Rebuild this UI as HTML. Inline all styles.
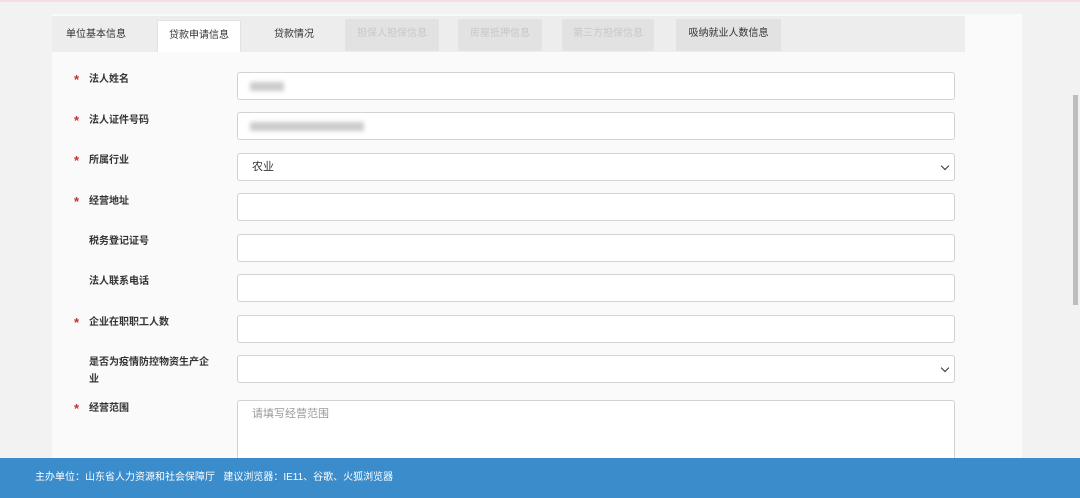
<!DOCTYPE html>
<html><head><meta charset="utf-8"><style>
*{margin:0;padding:0;box-sizing:border-box}
body{width:1080px;height:498px;overflow:hidden;background:#f2f2f2;font-family:"Liberation Sans","Noto Sans CJK SC",sans-serif;font-size:11px;color:#333;position:relative}
.pink{position:absolute;left:0;top:0;width:1080px;height:2px;background:#f6dde3}
.panel{position:absolute;left:52px;top:14px;width:970px;height:450px;background:#fafafa}
.tabbar{position:absolute;left:52px;top:16px;width:913px;height:36px;background:#ededed}
.tab{position:absolute;top:20px;height:32px;line-height:30px;text-align:center;font-size:10px;color:#333}
.tab.act{background:#fff;border:1px solid #e2e2e2;border-bottom:none}
.tab.dis{background:#e2e2e2;color:#c8c8c8;border-radius:2px;top:19px}
.tab.gr{background:#e2e2e2;border-radius:2px;top:19px}
.lab{position:absolute;left:89px;font-size:10px;color:#333;line-height:17px;font-weight:bold}
.star{position:absolute;left:74px;color:#c9302c;font-size:13px;font-weight:bold}
.inp{position:absolute;left:237px;width:718px;height:28px;background:#fff;border:1px solid #d2d2d2;border-radius:3px;font-size:11px;line-height:26px;padding-left:14px}
.arrow{position:absolute;right:6px;top:9px;width:6px;height:6px;border-right:1.5px solid #333;border-bottom:1.5px solid #333;transform:rotate(45deg)}
.blur{position:absolute;background:#ccc;filter:blur(2px)}
.foot{position:absolute;left:0;top:458px;width:1080px;height:40px;background:#3a8ccb;color:#fff;font-size:10px;line-height:40px;padding-left:35px}
.sb{position:absolute;left:1073px;top:95px;width:5px;height:210px;background:#bdbdbd}
</style></head><body>
<div class="pink"></div>
<div class="panel"></div>
<div class="tabbar"></div>
<div class="tab" style="left:56px;width:80px">单位基本信息</div>
<div class="tab act" style="left:157px;width:84px">贷款申请信息</div>
<div class="tab" style="left:258px;width:72px">贷款情况</div>
<div class="tab dis" style="left:345px;width:94px">担保人担保信息</div>
<div class="tab dis" style="left:458px;width:84px">房屋抵押信息</div>
<div class="tab dis" style="left:562px;width:92px">第三方担保信息</div>
<div class="tab gr" style="left:676px;width:105px">吸纳就业人数信息</div>

<span class="star" style="top:72px">*</span><div class="lab" style="top:71px">法人姓名</div>
<div class="inp" style="top:72px"><div class="blur" style="left:12px;top:9px;width:34px;height:9px"></div></div>
<span class="star" style="top:113px">*</span><div class="lab" style="top:112px">法人证件号码</div>
<div class="inp" style="top:112px"><div class="blur" style="left:12px;top:9px;width:114px;height:9px"></div></div>
<span class="star" style="top:153px">*</span><div class="lab" style="top:152px">所属行业</div>
<div class="inp" style="top:153px">农业<span class="arrow"></span></div>
<span class="star" style="top:194px">*</span><div class="lab" style="top:193px">经营地址</div>
<div class="inp" style="top:193px"></div>
<div class="lab" style="top:233px">税务登记证号</div>
<div class="inp" style="top:234px"></div>
<div class="lab" style="top:273px">法人联系电话</div>
<div class="inp" style="top:274px"></div>
<span class="star" style="top:315px">*</span><div class="lab" style="top:314px">企业在职职工人数</div>
<div class="inp" style="top:315px"></div>
<div class="lab" style="top:354px;width:126px">是否为疫情防控物资生产企业</div>
<div class="inp" style="top:355px"><span class="arrow"></span></div>
<span class="star" style="top:401px">*</span><div class="lab" style="top:400px">经营范围</div>
<div class="inp" style="top:400px;height:70px;color:#999;line-height:26px">请填写经营范围</div>
<div class="sb"></div>
<div class="foot">主办单位：山东省人力资源和社会保障厅&nbsp;&nbsp;&nbsp;建议浏览器：IE11、谷歌、火狐浏览器</div>
</body></html>
